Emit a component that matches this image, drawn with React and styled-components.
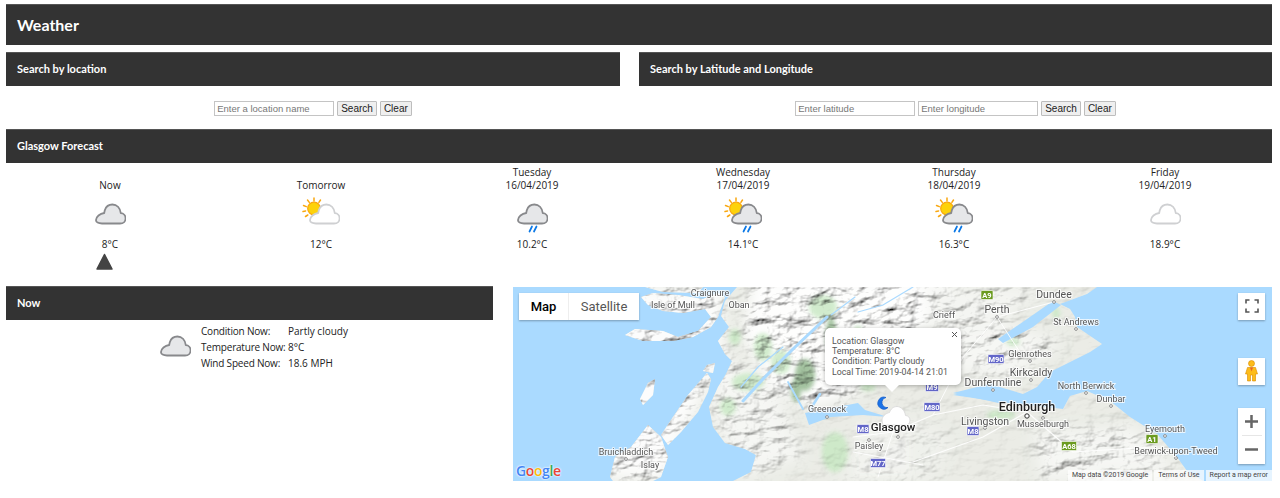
import React from "react";
import styled, { createGlobalStyle } from "styled-components";

const GlobalStyle = createGlobalStyle`
  html, body {
    margin: 0;
    padding: 0;
    background: #fff;
    overflow: hidden;
  }
  body {
    font-family: "Open Sans", "Noto Sans", sans-serif;
    font-size: 10px;
    color: #222;
  }
`;

const Page = styled.div`
  width: 1280px;
  height: 498px;
  box-sizing: border-box;
  padding: 4px 8px 0 6px;
`;

const Bar = styled.div`
  height: ${(p) => (p.$large ? "41px" : "34px")};
  box-sizing: border-box;
  display: flex;
  align-items: center;
  padding: 0 0 ${(p) => (p.$large ? "1px" : "2px")} 11px;
  background: #333;
  border-top: 1px solid #555;
  color: #fff;
  font-family: "Lato", "Open Sans", sans-serif;
  font-weight: 700;
  font-size: ${(p) => (p.$large ? "16px" : "11px")};
`;

const SearchRow = styled.div`
  display: grid;
  grid-template-columns: 614px 633px;
  column-gap: 19px;
  margin-top: 7px;
`;

const SearchForm = styled.form`
  display: flex;
  justify-content: center;
  gap: 3px;
  margin: 15px 0 13px;
`;

const TextInput = styled.input`
  width: 120px;
  height: 15px;
  box-sizing: border-box;
  padding: 0 2px;
  border: 1px solid #c4c4c4;
  font-family: "Liberation Sans", Arial, sans-serif;
  font-size: 9.5px;
  &::placeholder {
    color: #777;
    opacity: 1;
  }
`;

const FormButton = styled.button`
  height: 15px;
  box-sizing: border-box;
  padding: 0 3px;
  border: 1px solid #bdbdbd;
  border-radius: 1px;
  background: #efefef;
  color: #222;
  font-family: "Liberation Sans", Arial, sans-serif;
  font-size: 10px;
  line-height: 12px;
`;

const Forecast = styled.div`
  display: grid;
  grid-template-columns: repeat(6, 211px);
  margin: 2.5px 0 16px -1.5px;
`;

const Day = styled.div`
  display: flex;
  flex-direction: column;
  align-items: center;
  line-height: 13px;
`;

const DayLabel = styled.div`
  height: 26px;
  display: flex;
  flex-direction: column;
  justify-content: flex-end;
  align-items: center;
`;

const IconSlot = styled.div`
  height: 36px;
  margin-top: 5.5px;
  display: flex;
`;

const Temp = styled.div`
  margin-top: 5px;
`;

const WindArrow = styled.svg`
  width: 17px;
  height: 17px;
  margin: 1.5px 11px 0 0;
  display: block;
`;

const LowerRow = styled.div`
  display: grid;
  grid-template-columns: 487px 759px;
  column-gap: 20px;
  align-items: start;
`;

const NowBody = styled.div`
  display: flex;
  justify-content: center;
  padding-left: 9px;
  gap: 10px;
  margin-top: 3px;
`;

const NowIcon = styled.div`
  margin-top: 6px;
`;

const NowTable = styled.div`
  display: grid;
  grid-template-columns: 87px auto;
  grid-auto-rows: 16px;
  align-items: center;
  white-space: nowrap;
`;

const NowLabel = styled.span`
  letter-spacing: -0.2px;
`;

const MapFrame = styled.div`
  position: relative;
  width: 759px;
  height: 194px;
  margin-top: 1px;
  overflow: hidden;
  background: #aadaff;
  font-family: "Roboto", sans-serif;
`;

const MapCanvas = styled.svg`
  display: block;
  width: 759px;
  height: 194px;
  filter: blur(0.35px);
`;

const ReliefLayer = styled.g`
  mix-blend-mode: multiply;
`;

const PlaceLabel = styled.text`
  font-family: "Roboto", sans-serif;
  font-size: ${(p) => p.$size || 9}px;
  font-weight: ${(p) => (p.$strong ? 500 : 400)};
  fill: ${(p) => (p.$strong ? "#222" : "#555")};
  stroke: #fff;
  stroke-width: 2px;
  stroke-opacity: 0.75;
  paint-order: stroke;
  text-anchor: middle;
  dominant-baseline: middle;
`;

const ShieldText = styled.text`
  font-family: "Roboto", sans-serif;
  font-size: 7.5px;
  font-weight: 700;
  fill: #fff;
  text-anchor: middle;
  dominant-baseline: central;
`;

const MapTypes = styled.div`
  position: absolute;
  left: 6px;
  top: 6px;
  height: 27px;
  display: flex;
  background: #fff;
  box-shadow: 0 1px 2px rgba(0, 0, 0, 0.3);
  font-size: 13px;
`;

const MapType = styled.div`
  display: flex;
  align-items: center;
  justify-content: center;
  width: ${(p) => (p.$active ? "49px" : "70px")};
  color: ${(p) => (p.$active ? "#000" : "#565656")};
  font-weight: ${(p) => (p.$active ? 500 : 400)};
  border-left: ${(p) => (p.$active ? "none" : "1px solid #eee")};
`;

const MapButton = styled.div`
  position: absolute;
  right: 7px;
  top: ${(p) => p.$top}px;
  width: 27px;
  height: ${(p) => p.$height || 27}px;
  display: flex;
  flex-direction: column;
  align-items: center;
  justify-content: center;
  background: #fff;
  box-shadow: 0 1px 2px rgba(0, 0, 0, 0.3);
`;

const ZoomPart = styled.div`
  flex: 1;
  display: flex;
  align-items: center;
  justify-content: center;
  width: 20px;
  & + & {
    border-top: 1px solid #e6e6e6;
  }
`;

const Popup = styled.div`
  position: absolute;
  left: 312px;
  top: 41px;
  width: 136px;
  height: 57px;
  box-sizing: border-box;
  padding: 8px 0 0 7px;
  background: #fff;
  border-radius: 5px;
  box-shadow: 0 1px 4px rgba(0, 0, 0, 0.3);
  color: #555;
  font-size: 8.8px;
  line-height: 10.4px;
  white-space: nowrap;
  &::after {
    content: "";
    position: absolute;
    left: 60px;
    top: 57px;
    border: 7px solid transparent;
    border-top-color: #fff;
    border-bottom: none;
  }
`;

const PopupClose = styled.svg`
  position: absolute;
  right: 3px;
  top: 3px;
  width: 7px;
  height: 7px;
`;

const Logo = styled.div`
  position: absolute;
  left: 3px;
  bottom: 2px;
  font-family: "Open Sans", sans-serif;
  font-size: 14px;
  font-weight: 600;
  letter-spacing: -0.4px;
  line-height: 16px;
  text-shadow: 0 0 2px #fff, 0 0 2px #fff;
`;

const LogoLetter = styled.span`
  color: ${(p) => p.$color};
`;

const Attribution = styled.div`
  position: absolute;
  right: 0;
  bottom: 0;
  height: 11px;
  display: flex;
  gap: 2px;
  font-size: 7px;
  line-height: 11px;
  color: #444;
`;

const AttributionItem = styled.span`
  padding: 0 4px;
  background: rgba(255, 255, 255, 0.7);
`;

const days = [
  { lines: ["Now"], temp: "8°C", tone: "dark", arrow: true },
  { lines: ["Tomorrow"], temp: "12°C", tone: "light", sun: true },
  { lines: ["Tuesday", "16/04/2019"], temp: "10.2°C", tone: "dark", rain: true },
  { lines: ["Wednesday", "17/04/2019"], temp: "14.1°C", tone: "dark", sun: true, rain: true },
  { lines: ["Thursday", "18/04/2019"], temp: "16.3°C", tone: "dark", sun: true, rain: true },
  { lines: ["Friday", "19/04/2019"], temp: "18.9°C", tone: "light" },
];

const cloudPath =
  "M7 20.5H25C28.4 20.5 30.6 18.2 30.6 15.4C30.6 12.6 28.6 10.4 25.8 10.2C25.2 5 21.8 1.5 17.4 1.5C13.9 1.5 11 3.7 9.8 7.2C9.6 8.2 9.4 9 9.2 10C4.8 10.6 1.2 13.8 1 17C0.9 19.2 3.4 20.5 7 20.5Z";

const Cloud = ({ tone }) => (
  <path
    d={cloudPath}
    fill={tone === "dark" ? "#e6e7e9" : "#fff"}
    stroke={tone === "dark" ? "#88898c" : "#cfd0d2"}
    strokeWidth="1.8"
    strokeLinejoin="round"
  />
);

const WeatherIcon = ({ sun, rain, tone }) => {
  const left = sun ? 7 : 0;
  return (
    <svg width={sun ? 38 : 31} height="36" viewBox={`0 0 ${sun ? 38 : 31} 36`}>
      {sun && (
        <g>
          <g stroke="#f9a70f" strokeWidth="1.5" strokeLinecap="round">
            <path d="M12 1V4M5.5 3L7.3 5.4M18.5 3L16.9 5.4M1.5 8.5L4.3 9.6M1 14.5L3.6 14M3.5 19.5L5.8 18" />
          </g>
          <circle cx="12" cy="11.5" r="6.3" fill="#fdd20a" stroke="#f9a70f" strokeWidth="1.2" />
        </g>
      )}
      <g transform={`translate(${left} 6)`}>
        <Cloud tone={tone} />
        {rain && (
          <path d="M12.5 28.5L15 23.5M17 28.5L19.5 23.5" stroke="#0a78e6" strokeWidth="1.7" strokeLinecap="round" />
        )}
      </g>
    </svg>
  );
};

const mainland =
  "224,0 212,14 208,29 216,40 205,54 212,67 219,74 213,87 205,100 196,120 200,140 212,156 232,162 243,168 238,185 224,192 220,194 290,194 293,175 296,150 292,135 690,194 674,184 664,170 644,147 617,130 597,114 574,104 557,109 550,122 487,115 440,108 480,98 510,107 524,100 537,85 577,65 589,57 564,40 562,30 557,22 547,17 574,7 584,0";
const southland = "292,135 300,130 345,125 400,120 690,194 290,194";
const islands = [
  "112,48 122,42 150,44 165,50 185,44 198,30 192,22 170,26 150,24 135,18 128,10 140,6 165,8 190,12 205,6 212,10 205,30 198,40 180,50 160,54 130,54",
  "132,0 190,0 185,6 150,5",
  "148,148 160,130 175,108 194,86 198,92 195,105 185,125 168,145 155,158",
  "97,190 102,170 118,160 135,138 148,150 155,170 148,190 140,194 100,194",
  "127,112 135,96 142,92 140,108 130,118",
  "194,78 202,76 200,86 190,84",
  "240,194 250,186 270,190 268,194",
  "228,105 245,112 258,118 270,140 284,150 294,165 282,168 262,155 245,125",
  "264,143 278,155 288,175 282,186 270,170",
];
const greens = [
  [235, 95, 16, 9], [250, 60, 9, 14], [310, 20, 14, 12], [268, 75, 10, 12],
  [345, 60, 6, 22], [322, 165, 13, 20], [500, 55, 7, 4], [488, 128, 14, 5],
  [215, 120, 8, 9], [355, 100, 8, 4], [543, 26, 4, 6], [222, 50, 6, 8],
];
const darkGreens = [[292, 88, 10, 16], [318, 48, 5, 18], [283, 103, 5, 12]];
const places = [
  ["Craignure", 197, 7], ["Isle of Mull", 160, 19], ["Oban", 226, 19],
  ["Greenock", 314, 123], ["Paisley", 356, 160], ["Bruichladdich", 113, 166],
  ["Islay", 137, 179], ["Crieff", 431, 29], ["St Andrews", 563, 36],
  ["Glenrothes", 517, 68], ["Musselburgh", 530, 138], ["North Berwick", 573, 100],
  ["Dunbar", 598, 113], ["Eyemouth", 652, 143], ["Berwick-upon-Tweed", 663, 165],
];
const towns = [
  ["Dundee", 541, 8], ["Perth", 484, 23], ["Kirkcaldy", 518, 86],
  ["Dunfermline", 480, 96], ["Livingston", 472, 135],
];
const dots = [
  [541, 15], [484, 30], [563, 42], [517, 74], [518, 93], [480, 103], [573, 106],
  [598, 119], [472, 141], [530, 131], [652, 149], [663, 171], [356, 153], [314, 130],
  [113, 172], [385, 150],
];
const shields = [
  ["A9", 474, 8, 12, "#6b9b20"], ["M90", 483, 72, 16, "#6266c8"], ["M9", 419, 100, 13, "#6266c8"],
  ["M80", 419, 120, 16, "#6266c8"], ["M8", 460, 144, 12, "#6266c8"], ["A68", 556, 159, 15, "#6b9b20"],
  ["A1", 639, 152, 12, "#6b9b20"], ["M8", 350, 142, 12, "#6266c8"], ["M77", 365, 176, 15, "#6266c8"],
];

const MapBase = () => (
  <MapCanvas viewBox="0 0 759 194">
    <defs>
      <filter id="relief" x="0" y="0" width="100%" height="100%">
        <feTurbulence type="fractalNoise" baseFrequency="0.045 0.085" numOctaves="4" seed="7" />
        <feDiffuseLighting surfaceScale="6" lightingColor="#fff" diffuseConstant="1.2">
          <feDistantLight azimuth="225" elevation="52" />
        </feDiffuseLighting>
      </filter>
      <filter id="soft">
        <feGaussianBlur stdDeviation="2.2" />
      </filter>
      <filter id="softer">
        <feGaussianBlur stdDeviation="7" />
      </filter>
      <clipPath id="land">
        <polygon points={mainland} />
        <polygon points={southland} />
        {islands.map((pts) => (
          <polygon key={pts} points={pts} />
        ))}
      </clipPath>
      <mask id="terrain" maskUnits="userSpaceOnUse" x="0" y="0" width="759" height="194">
        <rect width="759" height="194" fill="#222" />
        <g filter="url(#softer)">
          <polygon points="240,-10 440,-10 420,30 395,55 355,65 345,105 300,120 260,100 230,50" fill="#eee" />
          <polygon points="200,60 260,100 290,170 230,190 200,130" fill="#999" />
          <polygon points="90,190 110,0 210,0 210,60 170,150 150,194" fill="#ddd" />
          <polygon points="430,35 470,30 550,55 500,90 440,85" fill="#999" />
          <polygon points="520,145 620,140 665,185 530,194" fill="#999" />
          <polygon points="410,0 530,0 480,40 420,45" fill="#888" />
          <polygon points="330,175 400,130 440,150 420,194 330,194" fill="#555" />
        </g>
      </mask>
    </defs>
    <rect width="759" height="194" fill="#aadaff" />
    <g fill="#e8eae3">
      <polygon points={mainland} />
      <polygon points={southland} />
      {islands.map((pts) => (
        <polygon key={pts} points={pts} />
      ))}
    </g>
    <g clipPath="url(#land)">
      <g filter="url(#soft)" opacity="0.8">
        <rect x="342" y="135" width="55" height="55" fill="#f3f4f0" />
        {greens.map(([x, y, w, h]) => (
          <ellipse key={`${x}-${y}`} cx={x} cy={y} rx={w} ry={h} fill="#c6e7c1" />
        ))}
        {darkGreens.map(([x, y, w, h]) => (
          <ellipse key={`${x}-${y}`} cx={x} cy={y} rx={w} ry={h} fill="#8cb387" />
        ))}
      </g>
      <ReliefLayer mask="url(#terrain)">
        <rect width="759" height="194" filter="url(#relief)" />
      </ReliefLayer>
    </g>
    <g fill="none" stroke="#aadaff" strokeLinecap="round">
      <path d="M314 30L280 62L250 92L230 114" strokeWidth="3" />
      <path d="M307 107L300 118L297 130" strokeWidth="2.5" />
      <path d="M270 60L245 80L228 100" strokeWidth="1.2" />
      <path d="M342 10L318 28" strokeWidth="1.2" />
      <path d="M400 0L370 18L345 25" strokeWidth="1.2" />
      <path d="M275 95L290 122" strokeWidth="1.8" />
    </g>
    <polygon points="292,126 345,116 352,123 375,130 350,128 318,130 296,138" fill="#aadaff" />
    <polygon points="440,106 480,96 490,117" fill="#aadaff" />
    <polygon points="485,52 540,14 548,18 520,40 490,56" fill="#aadaff" />
    <g fill="none" stroke="#fff" strokeLinecap="round" strokeLinejoin="round" opacity="0.9">
      <path d="M380 145L420 128L470 118L514 125M514 125L560 165L640 160M514 125L470 150L400 175" strokeWidth="1.2" />
      <path d="M380 145L365 190M380 145L340 150M420 128L450 70L484 30L541 15M484 30L510 70" strokeWidth="1" />
      <path d="M350 140L390 140M340 165L410 178" strokeWidth="1" />
    </g>
    {dots.map(([x, y]) => (
      <circle key={`${x}-${y}`} cx={x} cy={y} r="1.4" fill="#fff" stroke="#777" strokeWidth="0.8" />
    ))}
    <circle cx="514" cy="129" r="2.2" fill="#fff" stroke="#333" strokeWidth="1" />
    {shields.map(([text, x, y, w, color]) => (
      <g key={`${text}-${x}`}>
        <rect x={x - w / 2} y={y - 4.5} width={w} height="9" rx="1" fill={color} stroke="#fff" strokeWidth="0.6" />
        <ShieldText x={x} y={y}>{text}</ShieldText>
      </g>
    ))}
    {places.map(([name, x, y]) => (
      <PlaceLabel key={name} x={x} y={y}>{name}</PlaceLabel>
    ))}
    {towns.map(([name, x, y]) => (
      <PlaceLabel key={name} x={x} y={y} $size={10.5}>{name}</PlaceLabel>
    ))}
    <PlaceLabel x={514} y={121} $size={12.5} $strong>Edinburgh</PlaceLabel>
    <path
      d="M373 110.500A6 6 0 1 0 375 120.500A5 5 0 0 1 373 110.500Z"
      fill="#1a73e8"
      stroke="#1a5fc8"
      strokeWidth="0.8"
    />
    <path
      d="M371 138H392C395.500 138 397 136 397 133C397 130.500 395 128.500 392.500 128.500C392 123.500 388 119.500 384 119.500C380.500 119.500 377.500 122 376.500 125.500C373 126 369 129.500 369 133C369 136 370 138 371 138Z"
      fill="#fff"
      stroke="#ddd"
      strokeWidth="1"
    />
    <PlaceLabel x={380} y={141} $size={11.5} $strong>Glasgow</PlaceLabel>
  </MapCanvas>
);

const App = () => (
  <Page>
    <GlobalStyle />
    <Bar $large>Weather</Bar>

    <SearchRow>
      <section>
        <Bar>Search by location</Bar>
        <SearchForm>
          <TextInput placeholder="Enter a location name" />
          <FormButton type="button">Search</FormButton>
          <FormButton type="button">Clear</FormButton>
        </SearchForm>
      </section>
      <section>
        <Bar>Search by Latitude and Longitude</Bar>
        <SearchForm>
          <TextInput placeholder="Enter latitude" />
          <TextInput placeholder="Enter longitude" />
          <FormButton type="button">Search</FormButton>
          <FormButton type="button">Clear</FormButton>
        </SearchForm>
      </section>
    </SearchRow>

    <Bar>Glasgow Forecast</Bar>
    <Forecast>
      {days.map((day) => (
        <Day key={day.temp}>
          <DayLabel>
            {day.lines.map((line) => (
              <span key={line}>{line}</span>
            ))}
          </DayLabel>
          <IconSlot>
            <WeatherIcon sun={day.sun} rain={day.rain} tone={day.tone} />
          </IconSlot>
          <Temp>{day.temp}</Temp>
          {day.arrow && (
            <WindArrow viewBox="0 0 17 17">
              <path d="M8.500 1.500L16 16H1Z" fill="#444" stroke="#444" strokeWidth="1.500" strokeLinejoin="round" />
            </WindArrow>
          )}
        </Day>
      ))}
    </Forecast>

    <LowerRow>
      <section>
        <Bar>Now</Bar>
        <NowBody>
          <NowIcon>
            <WeatherIcon tone="dark" />
          </NowIcon>
          <NowTable>
            <NowLabel>Condition Now:</NowLabel>
            <span>Partly cloudy</span>
            <NowLabel>Temperature Now:</NowLabel>
            <span>8°C</span>
            <NowLabel>Wind Speed Now:</NowLabel>
            <span>18.6 MPH</span>
          </NowTable>
        </NowBody>
      </section>

      <MapFrame>
        <MapBase />
        <MapTypes>
          <MapType $active>Map</MapType>
          <MapType>Satellite</MapType>
        </MapTypes>
        <MapButton $top={6}>
          <svg width="14" height="14" viewBox="0 0 14 14">
            <path d="M1 4.500V1H4.500M9.500 1H13V4.500M13 9.500V13H9.500M4.500 13H1V9.500" fill="none" stroke="#555" strokeWidth="1.600" />
          </svg>
        </MapButton>
        <MapButton $top={71}>
          <svg width="13" height="22" viewBox="0 0 13 22">
            <circle cx="6.500" cy="3.500" r="3" fill="#fdbc1a" stroke="#d68a00" strokeWidth="0.600" />
            <path d="M2.500 7.500H10.500L12.500 14H10.500V21H7.500V15H5.500V21H2.500V14H0.500Z" fill="#fdbc1a" stroke="#d68a00" strokeWidth="0.600" />
            <path d="M5 7.500L6.500 11.500L8 7.500Z" fill="#e8622a" />
          </svg>
        </MapButton>
        <MapButton $top={121} $height={56}>
          <ZoomPart>
            <svg width="13" height="13" viewBox="0 0 13 13">
              <path d="M6.500 0V13M0 6.500H13" stroke="#666" strokeWidth="2.500" />
            </svg>
          </ZoomPart>
          <ZoomPart>
            <svg width="13" height="13" viewBox="0 0 13 13">
              <path d="M0 6.500H13" stroke="#666" strokeWidth="2.500" />
            </svg>
          </ZoomPart>
        </MapButton>
        <Popup>
          <div>Location: Glasgow</div>
          <div>Temperature: 8°C</div>
          <div>Condition: Partly cloudy</div>
          <div>Local Time: 2019-04-14 21:01</div>
          <PopupClose viewBox="0 0 7 7">
            <path d="M1 1L6 6M6 1L1 6" stroke="#555" strokeWidth="1" />
          </PopupClose>
        </Popup>
        <Logo>
          <LogoLetter $color="#4285f4">G</LogoLetter>
          <LogoLetter $color="#ea4335">o</LogoLetter>
          <LogoLetter $color="#fbbc05">o</LogoLetter>
          <LogoLetter $color="#4285f4">g</LogoLetter>
          <LogoLetter $color="#34a853">l</LogoLetter>
          <LogoLetter $color="#ea4335">e</LogoLetter>
        </Logo>
        <Attribution>
          <AttributionItem>Map data ©2019 Google</AttributionItem>
          <AttributionItem>Terms of Use</AttributionItem>
          <AttributionItem>Report a map error</AttributionItem>
        </Attribution>
      </MapFrame>
    </LowerRow>
  </Page>
);

export default App;
